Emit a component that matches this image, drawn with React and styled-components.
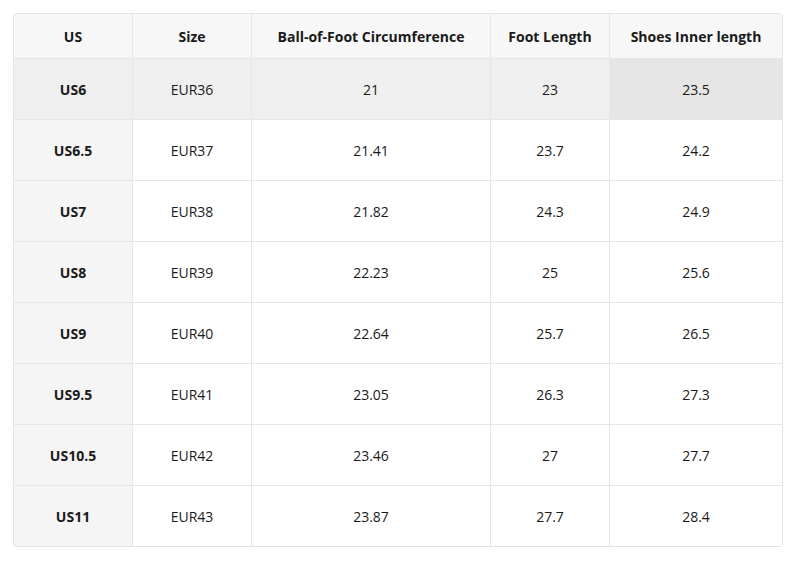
import React from 'react';
import styled, { createGlobalStyle } from 'styled-components';

const GlobalStyle = createGlobalStyle`
  body {
    margin: 0;
    background: #fff;
    font-family: "Open Sans", "Liberation Sans", sans-serif;
  }
`;

const rows = [
  ['US6', 'EUR36', '21', '23', '23.5'],
  ['US6.5', 'EUR37', '21.41', '23.7', '24.2'],
  ['US7', 'EUR38', '21.82', '24.3', '24.9'],
  ['US8', 'EUR39', '22.23', '25', '25.6'],
  ['US9', 'EUR40', '22.64', '25.7', '26.5'],
  ['US9.5', 'EUR41', '23.05', '26.3', '27.3'],
  ['US10.5', 'EUR42', '23.46', '27', '27.7'],
  ['US11', 'EUR43', '23.87', '27.7', '28.4'],
];

const headers = ['US', 'Size', 'Ball-of-Foot Circumference', 'Foot Length', 'Shoes Inner length'];
const widths = [118, 119, 239, 119, 173];

const Page = styled.div`
  padding: 13px;
`;

const Table = styled.table`
  width: 769px;
  border-collapse: separate;
  border-spacing: 0;
  table-layout: fixed;
  border: 1px solid #e3e3e3;
  border-radius: 3px;
  overflow: hidden;
  color: #1a1a1a;
  font-size: 14px;
`;

const Th = styled.th`
  height: 44px;
  padding: 0;
  background: #f7f7f7;
  font-weight: 700;
  text-align: center;
  border-left: ${(p) => (p.$first ? 'none' : '1px solid #e6e6e6')};
  border-bottom: 1px solid #e6e6e6;
`;

const Td = styled.td`
  height: 60px;
  padding: 0;
  text-align: center;
  font-weight: ${(p) => (p.$first ? 700 : 400)};
  background: ${(p) => p.$bg};
  border-left: ${(p) => (p.$first ? 'none' : '1px solid #e6e6e6')};
  border-top: ${(p) => (p.$top ? 'none' : '1px solid #e6e6e6')};
`;

const cellBg = (r, c) => {
  if (r === 0) return c === 4 ? '#e5e5e5' : '#efefef';
  if (c === 0) return '#f5f5f5';
  return '#fff';
};

export default function App() {
  return (
    <>
      <GlobalStyle />
      <Page>
        <Table>
          <colgroup>
            {widths.map((w, i) => (
              <col key={i} style={{ width: w }} />
            ))}
          </colgroup>
          <thead>
            <tr>
              {headers.map((h, i) => (
                <Th key={h} $first={i === 0}>{h}</Th>
              ))}
            </tr>
          </thead>
          <tbody>
            {rows.map((row, r) => (
              <tr key={row[0]}>
                {row.map((v, c) => (
                  <Td key={c} $first={c === 0} $top={r === 0} $bg={cellBg(r, c)}>
                    {v}
                  </Td>
                ))}
              </tr>
            ))}
          </tbody>
        </Table>
      </Page>
    </>
  );
}
